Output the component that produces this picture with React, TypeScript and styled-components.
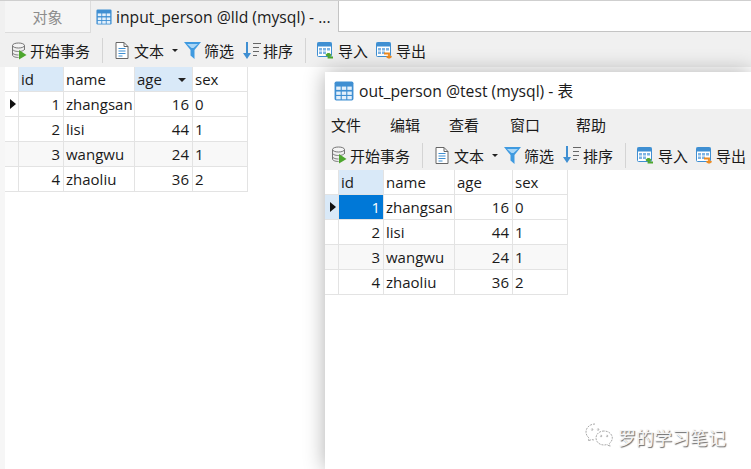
import React from "react";
import styled, { createGlobalStyle } from "styled-components";

const Global = createGlobalStyle`
  html, body { margin: 0; padding: 0; background: #fff; }
  * { box-sizing: border-box; }
`;

const FONT = `"Open Sans", "Noto Sans CJK SC", sans-serif`;

const Page = styled.div`
  position: relative;
  width: 751px;
  height: 469px;
  overflow: hidden;
  background: #fff;
  font-family: ${FONT};
  color: #1a1a1a;
`;

const TabBar = styled.div`
  display: flex;
  height: 33px;
  padding-left: 5px;
  background: #f0f0f0;
  border-top: 1px solid #cfcfcf;
`;

const ObjectTab = styled.div`
  width: 86px;
  display: flex;
  align-items: center;
  justify-content: center;
  font-size: 15px;
  color: #8c8c8c;
  background: #f5f5f5;
  border-right: 1px solid #dcdcdc;
  border-bottom: 1px solid #dcdcdc;
`;

const ActiveTab = styled.div`
  width: 246px;
  margin-left: 1px;
  display: flex;
  align-items: center;
  gap: 4px;
  padding-left: 4px;
  font-size: 15.7px;
  white-space: nowrap;
  background: #f0f0f0;
`;

const EmptyTabs = styled.div`
  flex: 1;
  height: 31px;
  background: #fff;
  border-left: 1px solid #c4c4c4;
  border-bottom: 1px solid #c4c4c4;
`;

const MainPane = styled.div`
  height: 402px;
  padding-left: 5px;
  background: #f6f6f6;
`;

const MainInner = styled.div`
  height: 100%;
  background: #fff;
`;

const Toolbar = styled.div<{ $pad: number; $h: number; $top: number; $bottom: number }>`
  display: flex;
  align-items: center;
  height: ${(p) => p.$h}px;
  padding: ${(p) => p.$top}px 0 ${(p) => p.$bottom}px ${(p) => p.$pad}px;
  background: #f0f0f0;
  font-size: 15px;
  white-space: nowrap;
`;

const Tool = styled.div<{ $gap?: number; $after?: number }>`
  display: flex;
  align-items: center;
  gap: ${(p) => p.$gap ?? 3}px;
  margin-right: ${(p) => p.$after ?? 0}px;
`;

const Caret = styled.span`
  width: 0;
  height: 0;
  margin-left: 8px;
  border-left: 3px solid transparent;
  border-right: 3px solid transparent;
  border-top: 3px solid #222;
`;

const Separator = styled.div<{ $after?: number }>`
  width: 1px;
  height: 25px;
  background: #d4d4d4;
  margin: 0 ${(p) => p.$after ?? 12}px 0 12px;
`;

const GridBox = styled.div`
  display: grid;
  grid-template-columns: 14px 45px 71px 58px 55px;
  width: 243px;
  font-size: 15px;
  line-height: 24px;
`;

const Cell = styled.div<{ $right?: boolean; $alt?: boolean; $sel?: boolean }>`
  height: 25px;
  padding: 0 ${(p) => (p.$right ? "3px" : "0")} 0 ${(p) => (p.$right ? "0" : "2px")};
  text-align: ${(p) => (p.$right ? "right" : "left")};
  border-right: 1px solid #e3e3e3;
  border-bottom: 1px solid #e3e3e3;
  background: ${(p) => (p.$sel ? "#0078d7" : p.$alt ? "#f8f8f8" : "#fff")};
  color: ${(p) => (p.$sel ? "#fff" : "#1a1a1a")};
  overflow: hidden;
  white-space: nowrap;
`;

const Head = styled.div<{ $on?: boolean }>`
  position: relative;
  height: 25px;
  padding-left: 2px;
  background: ${(p) => (p.$on ? "#d9e9f8" : "#fff")};
  border-right: 1px solid #e3e3e3;
  border-bottom: 1px solid #e3e3e3;
`;

const SortMark = styled.span`
  position: absolute;
  right: 6px;
  top: 11px;
  width: 0;
  height: 0;
  border-left: 4px solid transparent;
  border-right: 4px solid transparent;
  border-top: 4px solid #222;
`;

const RowMark = styled.div<{ $on?: boolean; $alt?: boolean }>`
  height: 25px;
  display: flex;
  align-items: center;
  padding-left: 5px;
  background: ${(p) => (p.$on ? "#d9e9f8" : p.$alt ? "#f8f8f8" : "#fff")};
  border-right: 1px solid #e3e3e3;
  border-bottom: 1px solid #e3e3e3;
`;

const Pointer = styled.span`
  width: 0;
  height: 0;
  border-top: 5px solid transparent;
  border-bottom: 5px solid transparent;
  border-left: 6px solid #111;
`;

const FloatWindow = styled.div`
  position: absolute;
  left: 325px;
  top: 72px;
  width: 426px;
  height: 397px;
  background: #fff;
  box-shadow: 0 0 20px rgba(0, 0, 0, 0.32);
`;

const TitleBar = styled.div`
  display: flex;
  align-items: center;
  gap: 5px;
  height: 37px;
  padding-left: 9px;
  font-size: 15.7px;
  background: #fff;
`;

const MenuBar = styled.div`
  display: flex;
  align-items: center;
  height: 32px;
  padding: 0 0 2px 6px;
  background: #f0f0f0;
  font-size: 15px;
`;

const MenuItem = styled.span<{ $w: number }>`
  width: ${(p) => p.$w}px;
`;

const Watermark = styled.div`
  position: absolute;
  left: 585px;
  top: 423px;
  display: flex;
  align-items: center;
  gap: 5px;
  font-size: 18px;
  color: #f4f4f4;
  text-shadow: 1px 1px 1px #666;
`;

const TableIcon = ({ size = 18 }: { size?: number }) => (
  <svg width={size} height={size} viewBox="0 0 18 18">
    <rect x="0.5" y="0.5" width="17" height="17" rx="1.5" fill="#3f8fd2" />
    <g fill="#e3f0fb">
      {[5, 9.5, 13.5].flatMap((y) =>
        [2, 7, 12].map((x) => <rect key={`${x}-${y}`} x={x} y={y} width="4" height="3" />)
      )}
    </g>
  </svg>
);

const TxnIcon = () => (
  <svg width="17" height="18" viewBox="0 0 17 18" fill="none">
    <ellipse cx="7.5" cy="3.500" rx="6" ry="2.500" fill="#f4f4f4" stroke="#777" />
    <path d="M1.500 3.500V13c0 1.400 2.700 2.500 6 2.500M13.500 3.500V8M1.500 7c0 1.400 2.700 2.500 6 2.500s6-1.100 6-2.500M1.500 10.500c0 1.400 2.700 2.500 6 2.500" stroke="#777" />
    <path d="M8 8l7.500 5L8 17.500z" fill="#4ea72e" />
  </svg>
);

const TextIcon = () => (
  <svg width="14" height="17" viewBox="0 0 14 17" fill="none">
    <path d="M1 .5h8L13 4.500V16.500H1z" fill="#fff" stroke="#666" />
    <path d="M9 .5V4.500H13" stroke="#666" />
    <path d="M3.500 6.500h7M3.500 9h7M3.500 11.500h7M3.500 14h4" stroke="#3f8fd2" />
  </svg>
);

const FilterIcon = () => (
  <svg width="17" height="17" viewBox="0 0 17 17">
    <path d="M0 0h17L10.500 8v9L6.500 13.500V8z" fill="#3f9ae0" />
    <path d="M3 2h11L9.500 6h-2z" fill="#a9d6f6" />
  </svg>
);

const SortIcon = () => (
  <svg width="18" height="18" viewBox="0 0 18 18" fill="none">
    <path d="M4 0v14" stroke="#3f8fd2" strokeWidth="2" />
    <path d="M0 11h8l-4 6z" fill="#3f8fd2" />
    <path d="M10 1.500h8M10 5.500h6M10 9.500h6M10 13.500h4" stroke="#666" />
  </svg>
);

const SheetBase = () => (
  <>
    <rect x=".5" y=".5" width="14" height="14" rx="1" fill="#fff" stroke="#3f8fd2" />
    <rect x=".5" y=".5" width="14" height="4" fill="#3f8fd2" />
    <path d="M2 6h3v2.500H2zM6 6h3v2.500H6zM10 6h3v2.500h-3zM2 9.500h3V12H2zM6 9.500h3V12H6z" fill="#7db4e4" />
  </>
);

const ImportIcon = () => (
  <svg width="17" height="17" viewBox="0 0 17 17" fill="none">
    <SheetBase />
    <path d="M16 15.500h-4.500V12M11.500 11.500L9 13.500M11.500 11.500L14 13.500" stroke="#4ea72e" strokeWidth="1.800" />
  </svg>
);

const ExportIcon = () => (
  <svg width="17" height="17" viewBox="0 0 17 17" fill="none">
    <SheetBase />
    <path d="M8 11.500h5V16M13 16l-2.500-1.800M13 16l2.500-1.800" stroke="#ee8a1e" strokeWidth="1.800" />
  </svg>
);

const WeChat = () => (
  <svg width="28" height="27" viewBox="0 0 28 27" fill="none" stroke="#aaa" strokeWidth="1" strokeDasharray="2 1">
    <path d="M10 1C5 1 1 4.500 1 9c0 2.500 1.200 4.500 3 6l-.5 3 3-1.500c1 .3 2 .5 3 .5" />
    <path d="M19 8c-4.500 0-8 3-8 7s3.500 7 8 7c1 0 2-.2 3-.5l3 2-.7-3c2-1.500 3-3.500 3-5.500 0-4-3.800-7-8.300-7z" />
    <circle cx="7" cy="6.500" r=".8" />
    <circle cx="13" cy="6.500" r=".8" />
    <circle cx="16" cy="13" r=".8" />
    <circle cx="22" cy="13" r=".8" />
  </svg>
);

const rows = [
  [1, "zhangsan", 16, 0],
  [2, "lisi", 44, 1],
  [3, "wangwu", 24, 1],
  [4, "zhaoliu", 36, 2],
] as const;

const Bar = ({ pad, h, top, bottom }: { pad: number; h: number; top: number; bottom: number }) => (
  <Toolbar $pad={pad} $h={h} $top={top} $bottom={bottom}>
    <Tool $gap={2}>
      <TxnIcon />
      <span>开始事务</span>
    </Tool>
    <Separator />
    <Tool $gap={5}>
      <TextIcon />
      <span>文本</span>
    </Tool>
    <Tool $after={6}>
      <Caret />
    </Tool>
    <Tool $gap={3} $after={9}>
      <FilterIcon />
      <span>筛选</span>
    </Tool>
    <Tool $gap={2}>
      <SortIcon />
      <span>排序</span>
    </Tool>
    <Separator $after={11} />
    <Tool $gap={4} $after={8}>
      <ImportIcon />
      <span>导入</span>
    </Tool>
    <Tool $gap={3}>
      <ExportIcon />
      <span>导出</span>
    </Tool>
  </Toolbar>
);

const Grid = ({ floating }: { floating?: boolean }) => (
  <GridBox>
    <Head />
    <Head $on>id</Head>
    <Head>name</Head>
    <Head $on={!floating}>
      age
      {!floating && <SortMark />}
    </Head>
    <Head>sex</Head>
    {rows.map((r, i) => {
      const alt = i === 2;
      return (
        <React.Fragment key={r[0]}>
          <RowMark $on={floating && i === 0} $alt={alt}>
            {i === 0 && <Pointer />}
          </RowMark>
          <Cell $right $alt={alt} $sel={floating && i === 0}>
            {r[0]}
          </Cell>
          <Cell $alt={alt}>{r[1]}</Cell>
          <Cell $right $alt={alt}>
            {r[2]}
          </Cell>
          <Cell $alt={alt}>{r[3]}</Cell>
        </React.Fragment>
      );
    })}
  </GridBox>
);

export default function App() {
  return (
    <Page>
      <Global />
      <TabBar>
        <ObjectTab>对象</ObjectTab>
        <ActiveTab>
          <TableIcon size={16} />
          <span>input_person @lld (mysql) - ...</span>
        </ActiveTab>
        <EmptyTabs />
      </TabBar>
      <Bar pad={11} h={34} top={1} bottom={0} />
      <MainPane>
        <MainInner>
          <Grid />
        </MainInner>
      </MainPane>
      <FloatWindow>
        <TitleBar>
          <TableIcon size={20} />
          <span>out_person @test (mysql) - 表</span>
        </TitleBar>
        <MenuBar>
          <MenuItem $w={59}>文件</MenuItem>
          <MenuItem $w={59}>编辑</MenuItem>
          <MenuItem $w={61}>查看</MenuItem>
          <MenuItem $w={66}>窗口</MenuItem>
          <MenuItem $w={40}>帮助</MenuItem>
        </MenuBar>
        <Bar pad={6} h={29} top={0} bottom={1} />
        <Grid floating />
      </FloatWindow>
      <Watermark>
        <WeChat />
        <span>罗的学习笔记</span>
      </Watermark>
    </Page>
  );
}
